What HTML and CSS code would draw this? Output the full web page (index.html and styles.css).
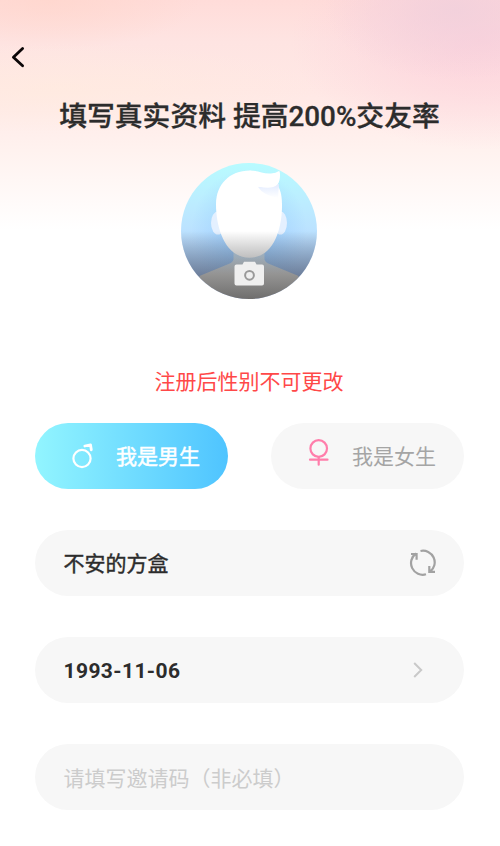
FILE: index.html
```html
<!DOCTYPE html>
<html lang="zh-CN">
<head>
<meta charset="utf-8">
<title>填写资料</title>
<link rel="stylesheet" href="styles.css">
</head>
<body>
<main class="page">
  <header class="nav">
    <svg class="back" viewBox="0 0 14 22" fill="none" stroke="#0b0607" stroke-width="2.8" stroke-linecap="round" stroke-linejoin="round"><path d="M11.600 2.400 2.400 11.200l9.200 8.600"/></svg>
  </header>
  <h1 class="title">填写真实资料 提高200%交友率</h1>
  <svg class="avatar" viewBox="0 0 136 136">
    <defs>
      <linearGradient id="sky" x1="0" y1="0" x2="0" y2="1"><stop offset="0" stop-color="#b8fbff"/><stop offset=".3" stop-color="#bcecff"/><stop offset=".55" stop-color="#bbdfff"/><stop offset="1" stop-color="#a4c2ff"/></linearGradient>
      <linearGradient id="shade" x1="0" y1="0" x2="0" y2="1"><stop offset="0" stop-color="#000" stop-opacity="0"/><stop offset=".65" stop-color="#222" stop-opacity=".45"/><stop offset="1" stop-color="#111" stop-opacity=".58"/></linearGradient>
      <linearGradient id="neck" x1="0" y1="0" x2="0" y2="1"><stop offset="0" stop-color="#c0dcf4"/><stop offset=".5" stop-color="#efeeed"/><stop offset="1" stop-color="#f0eeec"/></linearGradient>
      <radialGradient id="glow"><stop offset=".4" stop-color="#86c2ff" stop-opacity=".4"/><stop offset="1" stop-color="#86c2ff" stop-opacity="0"/></radialGradient>
      <linearGradient id="fold" x1="0" y1="0" x2="0" y2="1"><stop offset="0" stop-color="#e2ebff"/><stop offset="1" stop-color="#fff"/></linearGradient>
      <clipPath id="disc"><circle cx="68" cy="68" r="68"/></clipPath>
    </defs>
    <g clip-path="url(#disc)">
      <rect width="136" height="136" fill="url(#sky)"/>
      <ellipse cx="68" cy="68" rx="58" ry="62" fill="url(#glow)"/>
      <path d="M52.500 87h31v9.500q1 3 5 4.500L117 112.700l14 23.300H5l14-23.300L47.500 101q4-1.500 5-4.500z" fill="url(#neck)"/>
      <ellipse cx="37" cy="60" rx="7" ry="11.500" fill="#e4f0ff"/>
      <ellipse cx="99.500" cy="60" rx="6.500" ry="11.500" fill="#e4f0ff"/>
      <path d="M69 7.500C48 7.500 35 22 35 41c0 24 9 53.700 33.500 53.700S101 65 101 43c0-9-1-15-4-20z" fill="#fff"/>
      <path d="M77 24q5 8 20 11l1-14-10 2z" fill="url(#fold)"/>
      <path d="M69 7.500c9 0 13 3.500 21 2.900q5-.3 8-2.400c1.500 0 1.700 10-1.500 13.500-4 4-11 3.800-18 2.200L58 17z" fill="#fff"/>
      <rect y="68" width="136" height="68" fill="url(#shade)"/>
    </g>
    <path d="M55.500 101.500h6l1.500-2.700h11l1.500 2.700h5.500q2 0 2 2v17q0 2-2 2H55.500q-2 0-2-2v-17q0-2 2-2z" fill="#efefef"/>
    <circle cx="68.500" cy="112.300" r="4.400" fill="none" stroke="#999" stroke-width="2"/>
  </svg>
  <p class="notice">注册后性别不可更改</p>
  <form class="form">
    <div class="genders">
      <div class="pill gender male">
        <svg class="sex" viewBox="0 0 26 28" fill="none" stroke="#fff" stroke-width="2.200" stroke-linecap="round" stroke-linejoin="round"><circle cx="12" cy="16.500" r="8.600"/><path d="M14.800 4l5.700-1.200.8 5" stroke-width="2.800"/></svg>
        <span>我是男生</span>
      </div>
      <div class="pill gender female">
        <svg class="sex" viewBox="0 0 26 28" fill="none" stroke="#ff7eab" stroke-width="2.200" stroke-linecap="round"><circle cx="12.700" cy="9.500" r="8.300"/><path d="M12.700 18v7.700M4 20.700h17.500"/></svg>
        <span>我是女生</span>
      </div>
    </div>
    <div class="pill field">
      <span>不安的方盒</span>
      <svg class="refresh" viewBox="0 0 28 28" fill="none" stroke="#a2a2a2" stroke-width="2.200"><path d="M11.500 2A11.700 11.700 0 0 1 21 22.800M20.300 17v5.800h5.700M17 25.300A11.700 11.700 0 0 1 7 4.500M2 5h5.600v5.700"/></svg>
    </div>
    <div class="pill field date">
      <span>1993-11-06</span>
      <svg class="chevron" viewBox="0 0 10 16" fill="none" stroke="#c9c9c9" stroke-width="2"><path d="M1.200 1l7 7-7 7"/></svg>
    </div>
    <div class="pill field invite"><span>请填写邀请码（非必填）</span></div>
  </form>
</main>
</body>
</html>
```
FILE: styles.css
```css
* { box-sizing: border-box; }
body {
  margin: 0;
  background: #fff;
  color: #2c2c2c;
  font-family: Roboto, "Noto Sans CJK SC", sans-serif;
}
.page {
  height: 846px;
  display: flex;
  flex-direction: column;
  align-items: center;
  background:
    radial-gradient(ellipse 130px 70px at 455px 10px, rgba(240,208,220,.8) 0, rgba(240,208,220,0) 100%),
    radial-gradient(ellipse 190px 110px at 480px 40px, rgba(252,207,219,.85) 0, rgba(252,207,219,0) 100%),
    radial-gradient(ellipse 150px 50px at 50px 0, rgba(255,214,204,.75) 0, rgba(255,214,204,0) 100%),
    radial-gradient(ellipse 260px 45px at 60px 88px, rgba(255,236,222,.6) 0, rgba(255,236,222,0) 100%),
    linear-gradient(to bottom, #ffdcd9 0, #fee4e2 42px, #ffe8e5 92px, #fff1ee 145px, #fff7f5 180px, #fffbfa 205px, #fff 230px);
}
.nav {
  width: 100%;
  height: 94px;
  padding: 46px 0 0 11px;
}
.back { display: block; width: 14px; height: 22px; }
.title {
  margin: 0 1px 0 0;
  height: 46px;
  line-height: 46px;
  font-size: 27.8px;
  font-weight: 500;
  white-space: nowrap;
  -webkit-text-stroke: .3px #2c2c2c;
}
.avatar {
  width: 136px;
  height: 136px;
  margin: 23px 2px 0 0;
}
.notice {
  margin: 67px 2px 0 0;
  height: 32px;
  line-height: 32px;
  font-size: 21px;
  color: #ff4848;
}
.form {
  width: 429px;
  margin: 24.500px 2px 0 0;
  display: flex;
  flex-direction: column;
  gap: 41.300px;
}
.genders { display: flex; justify-content: space-between; }
.pill {
  height: 66px;
  border-radius: 33px;
  background: #f7f7f7;
  display: flex;
  align-items: center;
  font-size: 21px;
}
.gender { width: 193px; padding-left: 35.500px; color: #a5a5a5; }
.gender span { margin-top: -2px; }
.male {
  background: linear-gradient(90deg, #92f5ff, #4fc4ff);
  color: #fff;
}
.male span { -webkit-text-stroke: .5px #fff; }
.sex { width: 26px; height: 28px; margin-right: 20px; }
.female .sex { margin-top: -5px; }
.field {
  justify-content: space-between;
  padding: 0 27px 0 29px;
}
.field span { margin-top: -1px; -webkit-text-stroke: .4px #2c2c2c; }
.refresh { width: 28px; height: 28px; }
.field.date span {
  margin-top: 1px;
  font-weight: 700;
  letter-spacing: .4px;
  -webkit-text-stroke: 0;
}
.chevron { width: 10px; height: 16px; margin-right: 14px; }
.invite { color: #ccc; }
.field.invite span { -webkit-text-stroke: 0; }
```
